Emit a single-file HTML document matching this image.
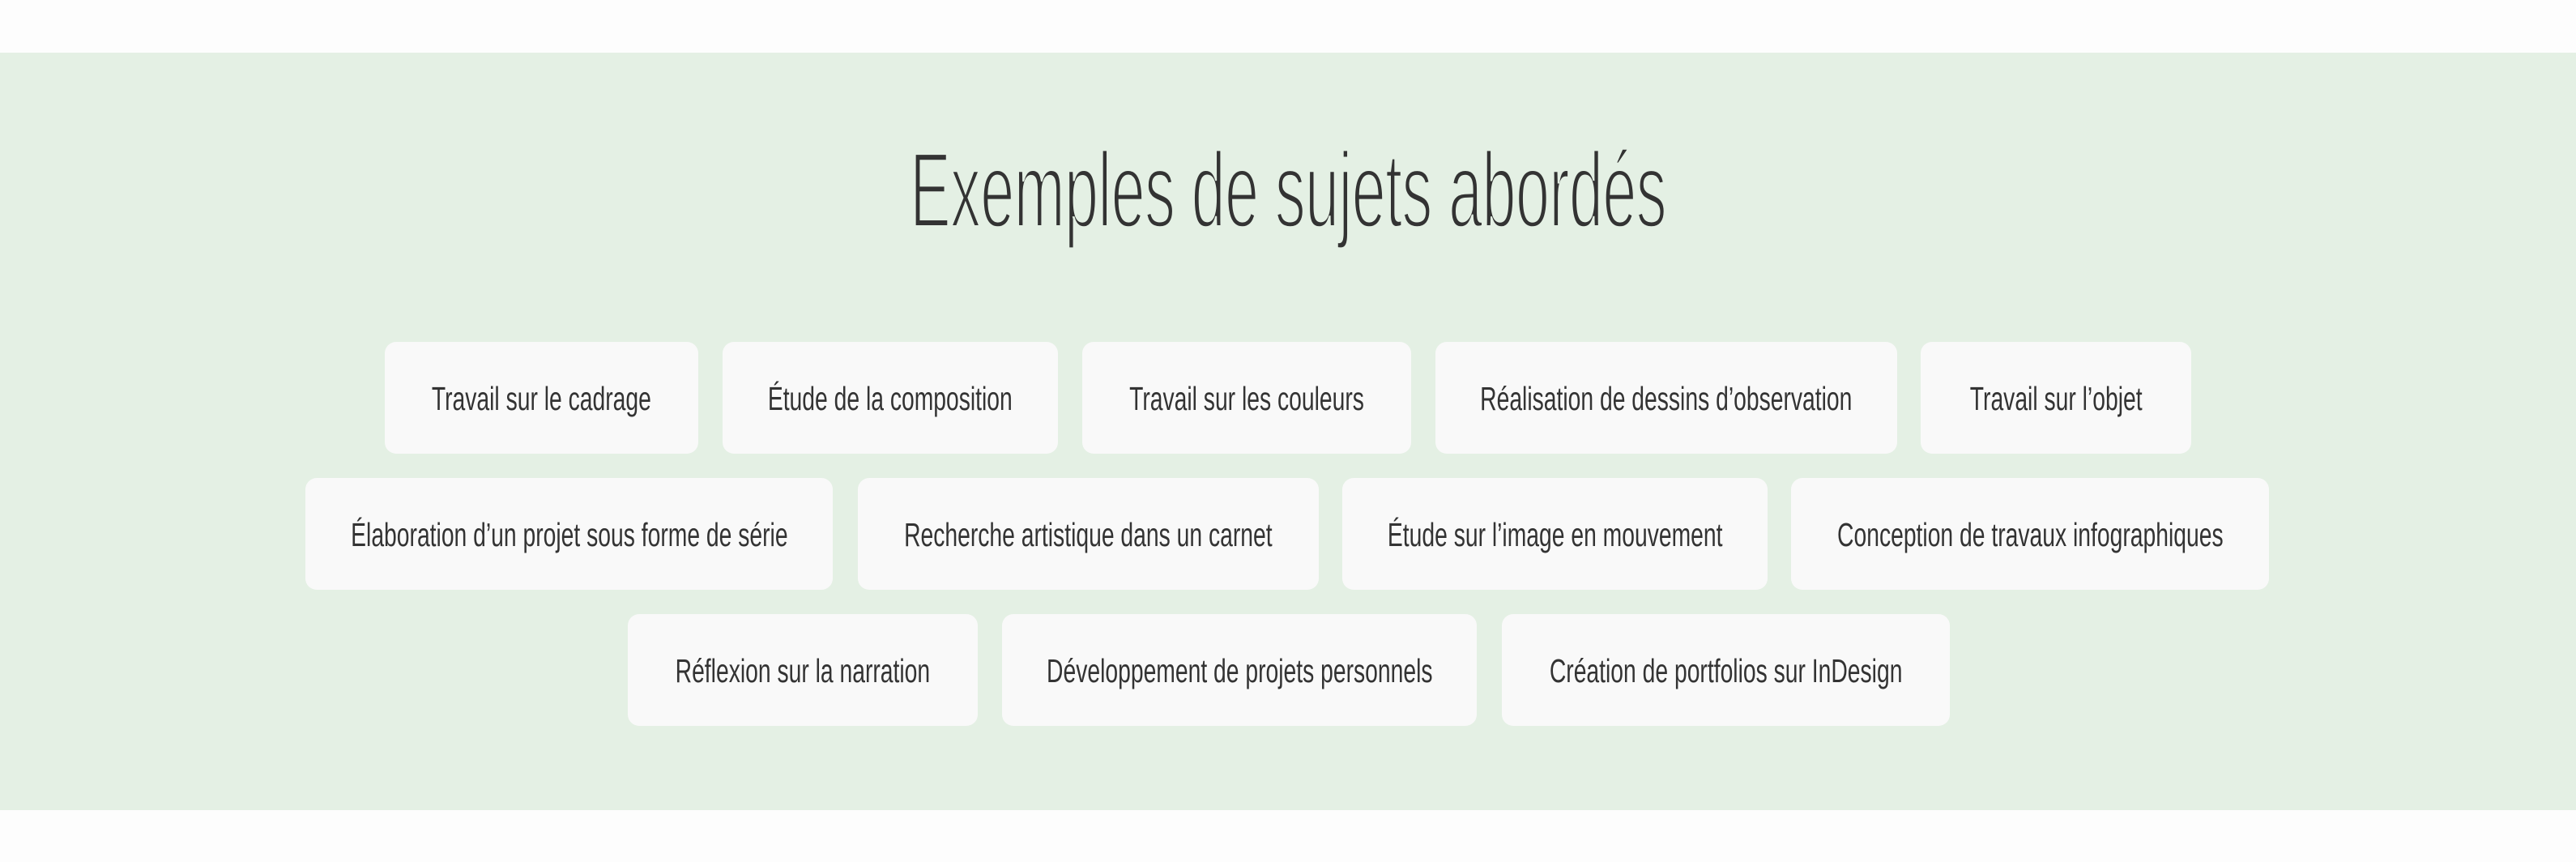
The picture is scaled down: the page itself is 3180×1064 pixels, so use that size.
<!DOCTYPE html>
<html><head><meta charset="utf-8"><style>
html,body{margin:0;padding:0;width:3180px;height:1064px;background:#fdfdfd;overflow:hidden;font-family:"Liberation Sans",sans-serif;}
.g{position:absolute;left:0;top:65px;width:3180px;height:935px;background:#e4f0e4;}
h1{position:absolute;left:0;top:160px;width:3180px;margin:0;text-align:center;font-weight:normal;font-size:132px;line-height:150px;color:#333;}
h1 span{display:inline-block;transform:scaleX(0.572);transform-origin:center;-webkit-text-stroke:4px #e4f0e4;letter-spacing:-1px;}
.b{position:absolute;height:138px;background:#f9f9f9;border-radius:14px;display:flex;align-items:center;justify-content:center;color:#333;font-size:41px;white-space:nowrap;}
.b span{display:inline-block;transform:scaleX(0.69);margin-top:2px;}
</style></head><body>
<div class="g"></div>
<h1><span>Exemples de sujets abordés</span></h1>
<div class="b" style="left:475px;top:422px;width:387px"><span>Travail sur le cadrage</span></div>
<div class="b" style="left:892px;top:422px;width:414px"><span>Étude de la composition</span></div>
<div class="b" style="left:1336px;top:422px;width:406px"><span>Travail sur les couleurs</span></div>
<div class="b" style="left:1772px;top:422px;width:570px"><span>Réalisation de dessins d’observation</span></div>
<div class="b" style="left:2371px;top:422px;width:334px"><span>Travail sur l’objet</span></div>
<div class="b" style="left:377px;top:590px;width:651px"><span>Élaboration d’un projet sous forme de série</span></div>
<div class="b" style="left:1059px;top:590px;width:569px"><span>Recherche artistique dans un carnet</span></div>
<div class="b" style="left:1657px;top:590px;width:525px"><span>Étude sur l’image en mouvement</span></div>
<div class="b" style="left:2211px;top:590px;width:590px"><span>Conception de travaux infographiques</span></div>
<div class="b" style="left:775px;top:758px;width:432px"><span>Réflexion sur la narration</span></div>
<div class="b" style="left:1237px;top:758px;width:586px"><span>Développement de projets personnels</span></div>
<div class="b" style="left:1854px;top:758px;width:553px"><span>Création de portfolios sur InDesign</span></div>
</body></html>
